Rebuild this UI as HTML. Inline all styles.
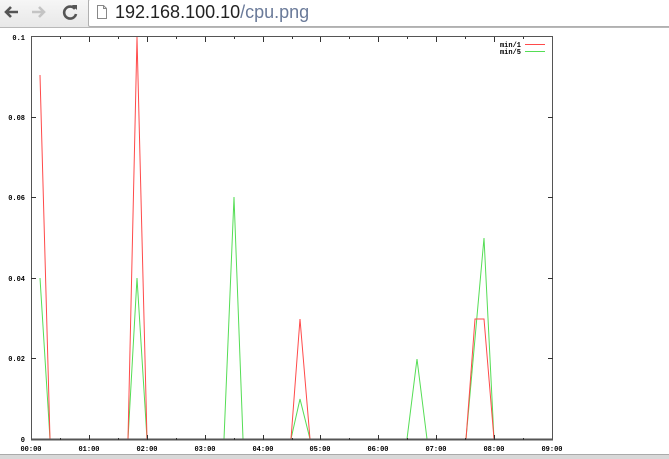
<!DOCTYPE html>
<html><head><meta charset="utf-8"><style>
html,body{margin:0;padding:0;width:669px;height:458px;overflow:hidden;background:#fff;font-family:"Liberation Sans",sans-serif}
.bar{position:absolute;left:0;top:0;width:669px;height:27px;background:linear-gradient(#f6f6f6,#e8e8e8);border-bottom:1px solid #b8b8b8}
.addr{position:absolute;left:88px;top:-1px;width:600px;height:26px;background:#fff;border:1px solid #b0b0b0;border-radius:2px}
.url{position:absolute;left:115px;top:0px;font-size:18px;line-height:24px;color:#222}
.url span{color:#6a7a99}
.bot{position:absolute;left:0;top:454px;width:669px;height:4px;background:#d8d8d8;border-top:1px solid #aaa}
svg text{font-family:"Liberation Mono",monospace;font-size:7px;font-weight:bold;fill:#000}
</style></head><body>
<div class="bar">
<svg width="88" height="27" style="position:absolute;left:0;top:0">
<path d="M18 12H6M11 7l-5 5 5 5" stroke="#555" stroke-width="2.6" fill="none"/>
<path d="M32 12h12M39 7l5 5-5 5" stroke="#c4c4c4" stroke-width="2.6" fill="none"/>
<path d="M75 9a6 6 0 1 0 1 5" stroke="#555" stroke-width="2.6" fill="none"/><path d="M72 5h5v5z" fill="#555"/>
</svg>
<div class="addr"></div>
<svg width="12" height="16" style="position:absolute;left:96px;top:4px"><path d="M1.5 1.5h6l3 3v10h-9z M7.5 1.5v3h3" fill="#fff" stroke="#888"/></svg>
<div class="url">192.168.100.10<span>/cpu.png</span></div>
</div>
<svg width="669" height="458" style="position:absolute;left:0;top:0">
<polyline fill="none" stroke="#55dd55" stroke-width="1" points="40,278 50,439 128,439 137,278 147,439 224,439 234,197 243,439 291,439 300,399 310,439 407,439 417,359 427,439 466,439 484,238 494,439"/>
<polyline fill="none" stroke="#ff4a4a" stroke-width="1" points="40,75 50,439 128,439 137,37 147,439 291,439 300,319 310,439 466,439 475,319 484,319 494,439"/>
<g stroke="#000" stroke-width="1" shape-rendering="crispEdges">
<path d="M31.5 36.5v403M552.5 36.5v403M31 36.5h522" stroke="#555" fill="none"/>
<path d="M31 439.5h522" stroke="#555" stroke-width="2"/>
<g stroke="#333">
<path d="M31 117.5h5M31 197.5h5M31 278.5h5M31 358.5h5M548 117.5h5M548 197.5h5M548 278.5h5M548 358.5h5"/>
<path d="M89.5 440v-5M147.5 440v-5M205.5 440v-5M263.5 440v-5M320.5 440v-5M378.5 440v-5M436.5 440v-5M494.5 440v-5
M60.5 440v-2M118.5 440v-2M176.5 440v-2M234.5 440v-2M292.5 440v-2M349.5 440v-2M407.5 440v-2M465.5 440v-2M523.5 440v-2
M89.5 37v5M147.5 37v5M205.5 37v5M263.5 37v5M320.5 37v5M378.5 37v5M436.5 37v5M494.5 37v5
M60.5 37v2M118.5 37v2M176.5 37v2M234.5 37v2M292.5 37v2M349.5 37v2M407.5 37v2M465.5 37v2M523.5 37v2"/>
</g></g>
<text x="25" y="40" text-anchor="end">0.1</text>
<text x="25" y="120" text-anchor="end">0.08</text>
<text x="25" y="200" text-anchor="end">0.06</text>
<text x="25" y="281" text-anchor="end">0.04</text>
<text x="25" y="361" text-anchor="end">0.02</text>
<text x="25" y="442" text-anchor="end">0</text>
<g text-anchor="middle">
<text x="31" y="451">00:00</text><text x="89" y="451">01:00</text><text x="147" y="451">02:00</text><text x="205" y="451">03:00</text><text x="263" y="451">04:00</text><text x="320" y="451">05:00</text><text x="378" y="451">06:00</text><text x="436" y="451">07:00</text><text x="494" y="451">08:00</text><text x="552" y="451">09:00</text>
</g>
<text x="521" y="47" text-anchor="end">min/1</text>
<text x="521" y="54" text-anchor="end">min/5</text>
<path d="M525 44.5h20" stroke="#ff4a4a"/>
<path d="M525 51.5h20" stroke="#55dd55"/>
</svg>
<div class="bot"></div>
</body></html>
